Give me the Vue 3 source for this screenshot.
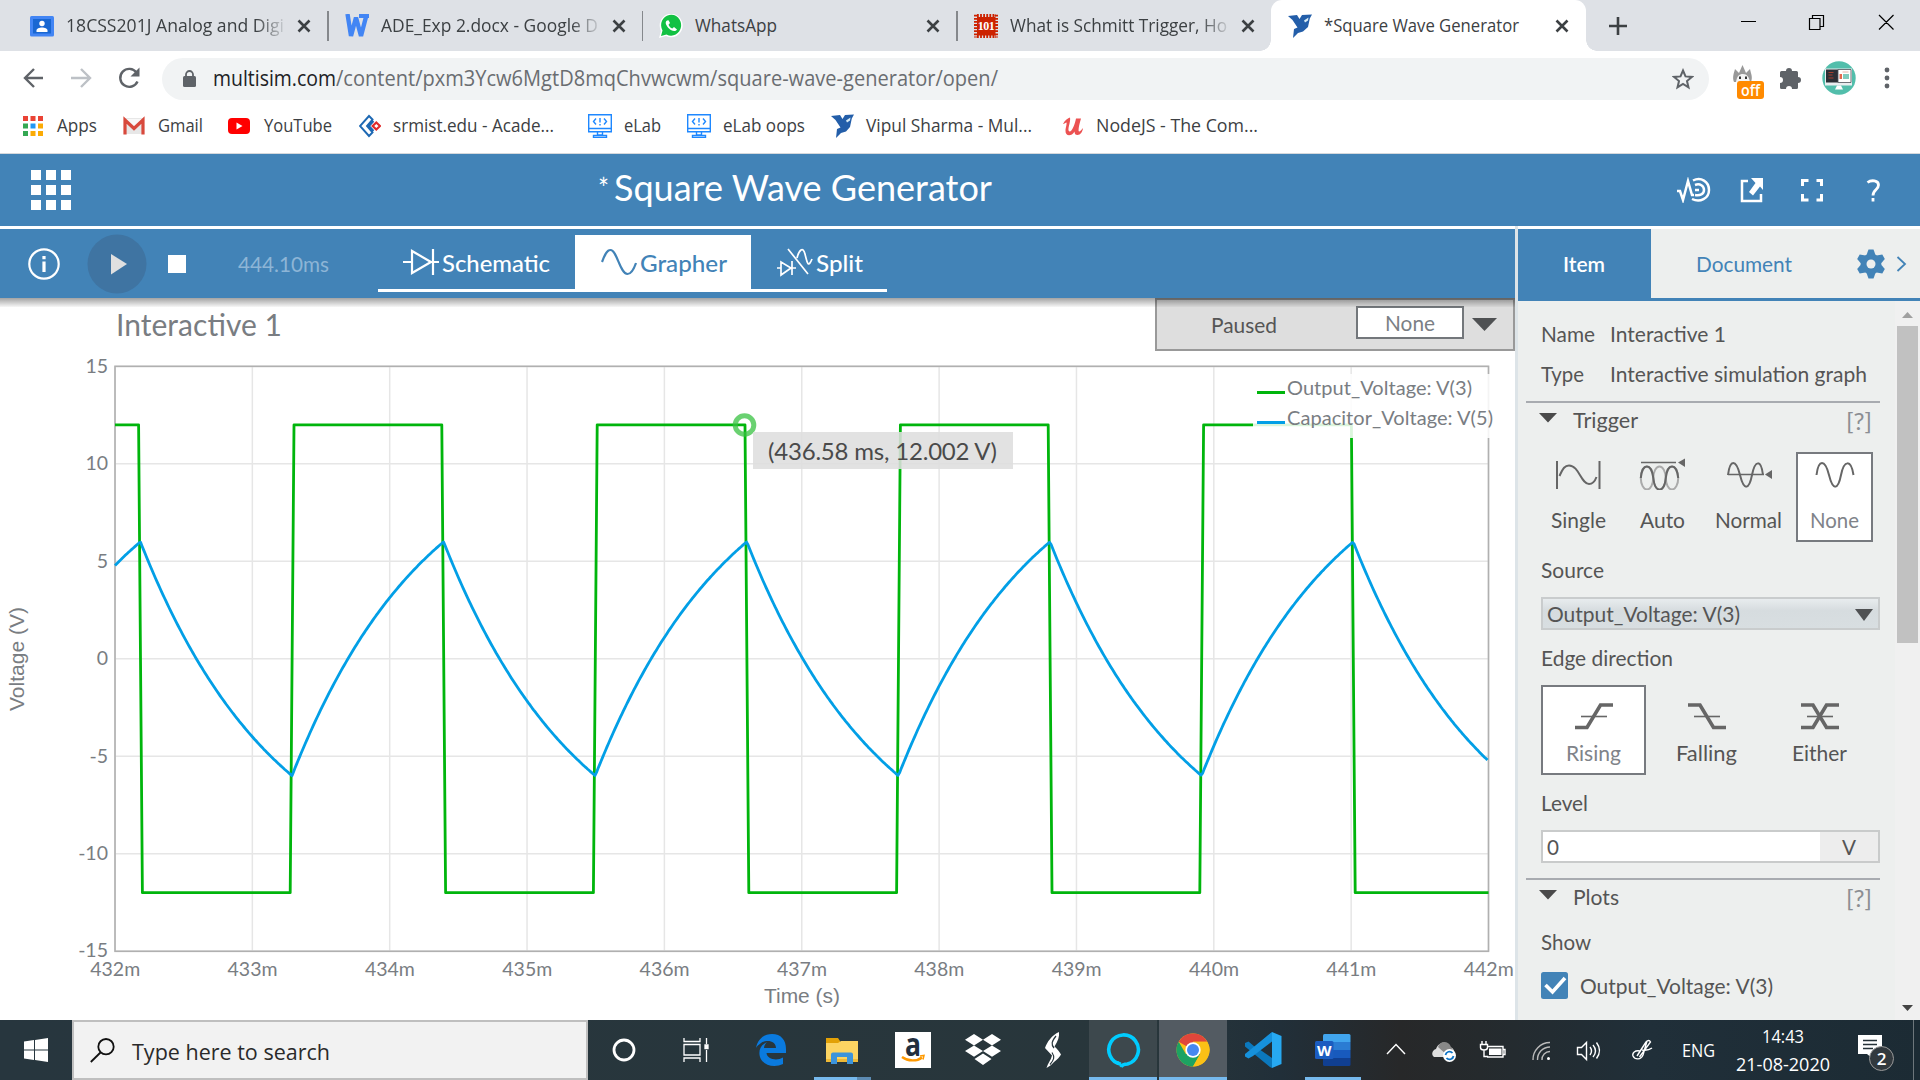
<script setup>
import { h } from 'vue'

// One line of text fitted to a width; its box is exactly the cap height.
const Fit = (p) => {
  const size = Number(p.s)
  const height = Math.round(size * 0.72)
  return h('svg', { width: p.w, height, style: 'display:block;overflow:visible;flex:none' }, [
    h('text', { x: 0, y: height, 'font-size': size, textLength: p.w, lengthAdjust: 'spacingAndGlyphs', fill: 'currentColor' }, p.t),
  ])
}
Fit.props = ['t', 'w', 's']

const tabs = [
  { icon: 'classroom', title: '18CSS201J Analog and Digi', w: 218 },
  { icon: 'docs', title: 'ADE_Exp 2.docx - Google D', w: 217 },
  { icon: 'whatsapp', title: 'WhatsApp', w: 82 },
  { icon: 'chip', title: 'What is Schmitt Trigger, Ho', w: 217 },
  { icon: 'ni', title: '*Square Wave Generator', w: 195, active: true },
]

const bookmarks = [
  { icon: 'apps', x: 22, iw: 22, gap: 13, title: 'Apps', w: 40 },
  { icon: 'gmail', x: 26, iw: 22, gap: 13, title: 'Gmail', w: 45 },
  { icon: 'youtube', x: 25, iw: 22, gap: 14, title: 'YouTube', w: 68 },
  { icon: 'srm', x: 27, iw: 22, gap: 12, title: 'srmist.edu - Acade...', w: 161 },
  { icon: 'elab', x: 34, iw: 24, gap: 12, title: 'eLab', w: 37 },
  { icon: 'elab', x: 26, iw: 24, gap: 12, title: 'eLab oops', w: 82 },
  { icon: 'ni', x: 26, iw: 23, gap: 12, title: 'Vipul Sharma - Mul...', w: 166 },
  { icon: 'udemy', x: 30, iw: 22, gap: 12, title: 'NodeJS - The Com...', w: 162 },
]

// Chart geometry: 432m..442m on x, -15..15 V on y
const X0 = 115
const X1 = 1488.5
const ZERO = 658.75
const UNIT = 19.49
const HALF = 151.6
const START = 140.4
const y = (v) => ZERO - v * UNIT

const xTicks = Array.from({ length: 11 }, (_, i) => ({ x: X0 + (i * (X1 - X0)) / 10, label: `${432 + i}m` }))
const yTicks = [15, 10, 5, 0, -5, -10, -15].map((v) => ({ v, y: y(v) }))

let square = `M${X0} ${y(12)}`
for (let k = 0; k < 9; k++) {
  const x = START + k * HALF
  const from = k % 2 ? -12 : 12
  square += ` L${x - 1.8} ${y(from)} L${x + 2} ${y(-from)}`
}
square += ` L${X1} ${y(-12)}`

const cap = []
for (let x = X0; x <= X1; x += 1.5) {
  const k = Math.floor((x - START) / HALF)
  const decay = 18 * Math.exp((-(x - START - k * HALF) / HALF) * Math.log(3))
  const v = k % 2 === 0 ? decay - 12 : 12 - decay
  cap.push(`${x.toFixed(1)},${y(v).toFixed(1)}`)
}
const capacitor = cap.join(' ')

const modes = [
  { name: 'Single', w: 55, box: 76, ml: -1 },
  { name: 'Auto', w: 45, box: 76, ml: 8 },
  { name: 'Normal', w: 67, box: 83, ml: 7 },
  { name: 'None', w: 49, box: 77, ml: 6, on: true },
]
const edges = [
  { name: 'Rising', w: 55, on: true },
  { name: 'Falling', w: 61 },
  { name: 'Either', w: 55 },
]
</script>

<template>
  <div class="screen">
    <!-- browser tabs -->
    <div class="tabs">
      <div v-for="(t, i) in tabs" :key="i" class="tab" :class="{ active: t.active, sep: i < 3 }">
        <svg class="fav" width="24" height="24" viewBox="0 0 24 24">
          <template v-if="t.icon === 'classroom'">
            <rect x="0" y="2" width="24" height="20.500" rx="1.500" fill="#4285f4" /><rect x="3" y="5" width="18" height="14.500" fill="#1967d2" />
            <circle cx="12" cy="9.500" r="2.700" fill="#fff" /><path d="M6.500 18v-1.500c0-4 11-4 11 0V18z" fill="#fff" />
          </template>
          <g v-else-if="t.icon === 'docs'" fill="none" stroke="#4285f4"><path d="M2.500 0L6 22 11 3.500 16 22 21.500 1" stroke-width="4.400" stroke-linejoin="bevel" /><path d="M14 2h10" stroke-width="4" /></g>
          <template v-else-if="t.icon === 'whatsapp'">
            <path d="M0 24l2-7A11.500 11.800 0 1 1 7 22z" fill="#fff" /><path d="M2 22l1.500-5.500A10 10.500 0 1 1 7.500 20.500z" fill="#12c143" />
            <path d="M8 6.500c-3 2 0 6 2 8s6 4 8 1l-3-2.500-1.700 1.500c-1.500-.5-3-2-3.800-3.800L11 9 9.500 6.200z" fill="#fff" />
          </template>
          <template v-else-if="t.icon === 'chip'">
            <rect x="3" y="3" width="18.500" height="18.500" fill="#cc2200" />
            <path d="M2 0.800v22.700M22.500 0.800v22.700" stroke="#cc2200" stroke-width="4" stroke-dasharray="1.800 1.300" /><path d="M3 1.500h19M3 22.800h19" stroke="#cc2200" stroke-width="3.500" stroke-dasharray="1.800 1.300" />
            <text x="12.200" y="16" text-anchor="middle" textLength="17" font-family="Liberation Serif, serif" font-weight="bold" font-size="12" fill="#fff">101</text>
          </template>
          <template v-else>
            <path d="M0 2l9-1 2.500 4L14 1l10-.5-2.200 4L20 13l-5 4.500-5 1.500-5 5 1-9 3.500-1.500L4.500 6z" fill="#235ea9" /><path d="M16 6.500l4.500-3-.5 3-3 2z" fill="#d7ebf5" />
          </template>
        </svg>
        <div class="tabtext" :class="{ fade: t.w > 210 }"><Fit :t="t.title" :w="t.w" s="18" /></div>
        <svg class="x" width="14" height="14" viewBox="0 0 14 14"><path d="M1.500 1.500l11 11M12.500 1.500l-11 11" stroke="#3c4043" stroke-width="2.600" /></svg>
      </div>
      <svg class="plus" width="18" height="18" viewBox="0 0 18 18"><path d="M9 0v18M0 9h18" stroke="#3c4043" stroke-width="2.600" /></svg>
      <svg class="win" width="154" height="17" viewBox="0 0 154 17">
        <path d="M0 7.500h15M68.500 4.500h10.500v11h-10.500zM71.500 4V1.500h11v11H79.500M138 1l14.500 14.500M152.500 1L138 15.500" fill="none" stroke="#000" stroke-width="1.200" />
      </svg>
    </div>

    <!-- address bar -->
    <div class="address">
      <svg width="120" height="24" viewBox="0 0 120 24" fill="none" stroke-width="2.400">
        <path d="M20 12H2M11 3l-9 9 9 9" stroke="#5f6368" /><path d="M48 12h18M58 3l9 9-9 9" stroke="#bdc1c6" />
        <path d="M114.500 15.500a9 9 0 1 1-1-9" stroke="#5f6368" /><path d="M116.500 1.500v9h-9z" fill="#5f6368" />
      </svg>
      <div class="omni">
        <svg width="13" height="17" viewBox="0 0 13 17"><rect y="6" width="13" height="11" rx="1.500" fill="#5f6368" /><path d="M3 7V4.500a3.500 3.500 0 0 1 7 0V7" fill="none" stroke="#5f6368" stroke-width="1.800" /></svg>
        <Fit class="host" t="multisim.com" w="123" s="21" />
        <Fit class="path" t="/content/pxm3Ycw6MgtD8mqChvwcwm/square-wave-generator/open/" w="662" s="21" />
        <svg class="star" width="22" height="22" viewBox="0 0 22 22"><path d="M11 2.500l2.500 5.900 6.400.5-4.900 4.200 1.500 6.300L11 16l-5.500 3.400L7 13.100 2.100 8.900l6.400-.5z" fill="none" stroke="#5f6368" stroke-width="2" /></svg>
      </div>
      <div class="ext">
        <svg width="24" height="20" viewBox="0 0 24 20"><path d="M3 18C1 13 3 9 4 5l4 4 3.500-8L15 9l4-4c1 5 3 8 1 13z" fill="#999" /><path d="M5 18c1-6 3-8 7-8s6 3 7 8z" fill="#f4f4f4" /><path d="M9 12.500v2.500M15 12.500v2.500" stroke="#333" stroke-width="2" /></svg>
        <span class="off"><Fit t="off" w="19" s="16" /></span>
      </div>
      <svg class="puzzle" width="22" height="22" viewBox="0 0 22 22"><path d="M0 5.500Q0 4 1.500 4H6a3 3 0 1 1 6 0h4.500Q18 4 18 5.500V10a3 3 0 0 1 0 6v4.500q0 1.500-1.500 1.500H12a3 3 0 0 0-6 0H1.500Q0 22 0 20.500V16a3 3 0 0 0 0-6z" fill="#5f6368" /></svg>
      <svg class="avatar" width="34" height="34" viewBox="0 0 34 34"><circle cx="17" cy="17" r="16.700" fill="#52beab" /><path d="M3 7.500h27v17H3z" fill="#e9edef" /><path d="M4 8.500h12v13H4z" fill="#2c2f35" /><path d="M16 8.500h13v13H16z" fill="#fff" stroke="#4b5157" stroke-width=".8" /><path d="M6.500 11.500h5M6.500 14h4M6.500 17h5" stroke="#a2402f" stroke-width="1.200" /><path d="M17.500 13h2.500v5h-2.500z" fill="#e4694f" /><path d="M20.500 11h6" stroke="#e8b3a8" /><path d="M21 13h6v5h-6z" fill="#80cbbd" /><path d="M15 24.500h4l2 4h-8z" fill="#fff" /></svg>
      <svg class="dots" width="6" height="22" viewBox="0 0 6 22" fill="#5f6368"><circle cx="3" cy="3" r="2.400" /><circle cx="3" cy="11" r="2.400" /><circle cx="3" cy="19" r="2.400" /></svg>
    </div>

    <!-- bookmarks -->
    <div class="bookmarks">
      <div v-for="(b, i) in bookmarks" :key="i" class="bm" :style="{ marginLeft: b.x + 'px', gap: b.gap + 'px' }">
        <svg :width="b.iw" height="24" :viewBox="`0 0 ${b.iw} 24`">
          <template v-if="b.icon === 'apps'">
            <path d="M1 2h5v5H1zM8.500 2h5v5h-5zM16 2h5v5h-5z" fill="#ea4335" /><path d="M1 9.500h5v5H1zM1 17h5v5H1z" fill="#34a853" /><path d="M8.500 9.500h5v5h-5z" fill="#2196f3" /><path d="M16 9.500h5v5h-5zM8.500 17h5v5h-5zM16 17h5v5h-5z" fill="#fbab05" />
          </template>
          <template v-else-if="b.icon === 'gmail'"><path d="M1 4h20v16H1z" fill="#e7e7e7" /><path d="M3 5h16l-8 7z" fill="#f8f8f8" /><path d="M2 20.500V6l9 8.500L20 6v14.500" fill="none" stroke="#d8493c" stroke-width="3.200" /></template>
          <template v-else-if="b.icon === 'youtube'"><rect y="4" width="22" height="16" rx="4" fill="#f00" /><path d="M8.500 8.500l6 3.500-6 3.500z" fill="#fff" /></template>
          <template v-else-if="b.icon === 'srm'"><path d="M13.500 5.500L10 2 1 12l9 10 3.500-3.500L8 12zM14.500 7L10 12l4.500 5" fill="none" stroke="#1d68b3" stroke-width="1.900" /><path d="M17.300 8.500L21 12l-3.700 3.500L13.700 12z" fill="none" stroke="#e12b2b" stroke-width="2.200" /></template>
          <g v-else-if="b.icon === 'elab'" fill="none" stroke="#1e88ff" stroke-width="1.400"><path d="M.7.700h22.600v17H.7zM.7 14.500h22.600M9.500 18v3h5v-3M5.500 21.500h13v2h-13z" /><path d="M8 4.500L5.500 7.500 8 10.500M16 4.500l2.500 3-2.500 3M12 4v4.500M12 10v1.500" /></g>
          <template v-else-if="b.icon === 'ni'"><path d="M0 2l9-1 2.500 4L14 1l9-.5-2.200 4L19 13l-4 4.500-5 1.500-5 5 1-9 3.500-1.500L4.500 6z" fill="#235ea9" /><path d="M15 6.500l4.500-3-.5 3-3 2z" fill="#d7ebf5" /></template>
          <path v-else d="M1 10C3 6 6 4 8 3.500 9 8 4.500 16.500 7.500 17.500 10 18 13 10 14 4.500h5C17 11 16 17 17 17.500c1.500 0 2-1.500 4-3.500-.5 4-2.500 7-5.500 7-2 0-3-1-3-3.500-3 5.500-9.500 5-9-1C3.500 14 5 10 4.500 8.500 3.500 8.500 2.500 10 1 10z" fill="#ec5252" />
        </svg>
        <Fit class="up1" :t="b.title" :w="b.w" s="18" />
      </div>
    </div>

    <!-- application header -->
    <header class="app">
      <svg width="40" height="40" viewBox="0 0 40 40" fill="#fff"><path d="M0 0h10v10H0zM15 0h10v10H15zM30 0h10v10H30zM0 15h10v10H0zM15 15h10v10H15zM30 15h10v10H30zM0 30h10v10H0zM15 30h10v10H15zM30 30h10v10H30z" /></svg>
      <div class="title"><Fit class="asterisk" t="*" w="11" s="29" /><Fit t="Square Wave Generator" w="378" s="36" /></div>
      <svg class="hi" width="208" height="26" viewBox="0 0 208 26" fill="none" stroke="#fff" stroke-width="2.500">
        <path d="M1 14h3l3 9 5-19 4 14h2M17 3.500c8-4 16 1 16 9.500s-9 13-17 9M19 8c5-2 9 1 9 5s-4 6-9 5M19 13h4" />
        <path d="M72 4h-6v20h19v-7" /><path d="M75 1h12v12l-3-3.500-7 9-4-3.500 6.500-9z" fill="#fff" stroke="none" />
        <path d="M126.500 9V3.500h6M140.500 3.500h5V9M145.500 17v6h-5M132.500 23h-6v-6" stroke-width="3" />
        <path d="M191.500 5.500c4-3 11-2 11 2.500 0 5-5.500 4.500-5.500 10.500M197 21v3.500" stroke-width="2.800" />
      </svg>
    </header>

    <div class="work">
      <main class="left">
        <div class="bar">
          <svg class="info" width="32" height="32" viewBox="0 0 32 32"><circle cx="16" cy="16" r="14.700" fill="none" stroke="#fff" stroke-width="2.200" /><path d="M16 13.500V24M16 8v3.200" stroke="#fff" stroke-width="3.200" /></svg>
          <svg class="play" width="60" height="60" viewBox="0 0 60 60"><circle cx="30" cy="30" r="29.500" fill="#3f74a2" /><path d="M24 20l16 10-16 10.500z" fill="#e0e0e0" /></svg>
          <span class="stop"></span>
          <Fit class="time down1" t="444.10ms" w="91" s="21" />
          <nav class="views">
            <div class="view v1">
              <svg width="36" height="28" viewBox="0 0 36 28" fill="none" stroke="#fff" stroke-width="2.200"><path d="M0 14h9M30 14h6M9 3v22l19-11zM30 1v26" /></svg>
              <Fit class="down1" t="Schematic" w="108" s="23.500" />
            </div>
            <div class="view v2">
              <svg width="36" height="28" viewBox="0 0 36 28" fill="none" stroke="#4283b7" stroke-width="2.200"><path d="M1 14C4 6 6 2 9.500 2 16 2 19 26 26.500 26c3.500 0 6-4 8.500-11" /></svg>
              <Fit class="down1" t="Grapher" w="87" s="23.500" />
            </div>
            <div class="view v3">
              <svg width="36" height="30" viewBox="0 0 36 30" fill="none" stroke="#fff" stroke-width="1.700"><path d="M0 21h4M15 21h4M4 15v13l10-7zM15 14v14M11 2l20 25M20 11c2-8 6-12 8-4s3 15 7 5" /></svg>
              <Fit class="down1" t="Split" w="47" s="23.500" />
            </div>
          </nav>
        </div>
        <div class="graph">
          <svg width="1515" height="722" viewBox="0 298 1515 722" class="chart">
            <text x="116" y="336" font-size="30" textLength="166">Interactive 1</text>
            <g stroke="#e6e6e6" stroke-width="1.500">
              <path v-for="t in xTicks" :key="t.label" :d="`M${t.x} 366V951`" />
              <path v-for="t in yTicks" :key="t.v" :d="`M${X0} ${t.y}H${X1}`" />
            </g>
            <rect :x="X0" y="366.300" :width="X1 - X0" height="585" fill="none" stroke="#b0b0b0" stroke-width="1.600" />
            <text v-for="t in yTicks" :key="'y' + t.v" x="108" :y="t.y + 6.300" text-anchor="end" font-size="19.500">{{ t.v }}</text>
            <text v-for="t in xTicks" :key="'x' + t.label" :x="t.x + 0.200" y="976" text-anchor="middle" font-size="19.500">{{ t.label }}</text>
            <text class="arial" x="764" y="1003" font-size="20" textLength="76" lengthAdjust="spacingAndGlyphs">Time (s)</text>
            <text class="arial" x="-711" y="24" font-size="20" textLength="104" lengthAdjust="spacingAndGlyphs" transform="rotate(-90)">Voltage (V)</text>
            <path :d="square" fill="none" stroke="#00b50c" stroke-width="2.800" stroke-linejoin="round" />
            <polyline :points="capacitor" fill="none" stroke="#029fe6" stroke-width="2.800" stroke-linejoin="round" />
            <rect x="1253" y="374" width="245" height="64" fill="#fff" opacity=".86" />
            <path d="M1257 392.500h28" stroke="#00b50c" stroke-width="3" /><path d="M1257 422.500h28" stroke="#029fe6" stroke-width="3" />
            <text x="1287" y="395" font-size="20" textLength="185">Output_Voltage: V(3)</text>
            <text x="1287" y="425" font-size="20" textLength="206">Capacitor_Voltage: V(5)</text>
            <circle cx="744.500" cy="425" r="9.300" fill="none" stroke="#38c142" stroke-opacity=".75" stroke-width="5" />
            <rect x="753" y="432" width="260" height="37" fill="#dedede" opacity=".88" />
            <text x="768" y="460" font-size="24" textLength="229" fill="#4a4a4a" class="tip">(436.58 ms, 12.002 V)</text>
          </svg>
          <div class="status">
            <Fit class="paused down1" t="Paused" w="66" s="21" />
            <div class="nonebox"><Fit class="down1" t="None" w="50" s="21" /></div>
            <svg width="25" height="13" viewBox="0 0 25 13"><path d="M0 0h25L12.500 13z" fill="#4f5153" /></svg>
          </div>
          <div class="shade"></div>
        </div>
      </main>

      <aside class="side">
        <div class="sidetabs">
          <div class="item"><Fit class="down1" t="Item" w="42" s="21.500" /></div>
          <div class="doc">
            <Fit class="down1" t="Document" w="96" s="21.500" />
            <svg class="gear" width="28" height="30" viewBox="-14 -15 28 30" fill="#4283b7"><circle r="10.300" /><g v-for="a in [0, 60, 120]" :key="a" :transform="`rotate(${a})`"><path d="M-4.500-9L-2.500-14.500h5L4.500-9v18l-2 5.500h-5l-2-5.500z" /></g><circle r="4.500" fill="#edefee" /></svg>
            <svg width="11" height="16" viewBox="0 0 11 16"><path d="M1.500 1L9 8l-7.500 7" fill="none" stroke="#4283b7" stroke-width="1.800" /></svg>
          </div>
        </div>
        <div class="sidebody">
          <div class="props">
            <div class="row mt26"><Fit t="Name" w="54" s="21" /><Fit class="val" t="Interactive 1" w="116" s="21" /></div>
            <div class="row mt25"><Fit t="Type" w="43" s="21" /><Fit class="val2" t="Interactive simulation graph" w="257" s="21" /></div>
            <div class="rule mt19"></div>
            <div class="row mt10 sect"><svg width="18" height="15" viewBox="0 0 18 15"><path d="M0 0h18L9 9.500z" fill="#4a4a4a" /></svg><Fit class="st" t="Trigger" w="65" s="21" /><Fit class="q" t="[?]" w="26" s="24" /></div>
            <div class="row modes">
              <div v-for="m in modes" :key="m.name" class="pick mode" :class="{ on: m.on }" :style="{ width: m.box + 'px', marginLeft: m.ml + 'px' }">
                <svg width="48" height="32" viewBox="0 0 48 32" fill="none" stroke="#666" stroke-width="2">
                  <path v-if="m.name === 'Single'" d="M3 3v28M45.500 3v28M5.500 18C9 10 11 7.500 15 7.500 25 7.500 27 26 35 26c4 0 6-3 7.500-7" />
                  <template v-else-if="m.name === 'Auto'"><ellipse cx="9" cy="20" rx="6.200" ry="11.500" stroke="#aaa" /><ellipse cx="21.500" cy="20" rx="6.200" ry="11.500" stroke="#aaa" /><ellipse cx="34" cy="20" rx="6.200" ry="11.500" stroke="#aaa" /><path d="M2.800 20C4 4.500 13.500 4.500 15.300 20s11 15.500 12.500 0 11-15.500 12.400 0" /><path d="M3 4.500h35" stroke-width="1.600" /><path d="M40 4.500l7-4v8.500z" fill="#666" stroke="none" /></template>
                  <template v-else-if="m.name === 'Normal'"><path d="M3 17C5 1 11 1 15 17s9 15 12 0S36 1 38 17" /><path d="M3 16.500h36" stroke-width="1.600" /><path d="M40 16.500l7-4.500v9z" fill="#666" stroke="none" /></template>
                  <path v-else d="M5.500 17C7.500 1 14 1 18 17s9 15 12 0S40 1 42.500 17" />
                </svg>
                <Fit :t="m.name" :w="m.w" s="21" />
              </div>
            </div>
            <Fit class="mt21" t="Source" w="63" s="21" />
            <div class="select mt19"><Fit class="down1" t="Output_Voltage: V(3)" w="193" s="21" /><svg class="down1" width="18" height="12" viewBox="0 0 18 12"><path d="M0 0h18L9 12z" fill="#4f5153" /></svg></div>
            <Fit class="mt21" t="Edge direction" w="132" s="21" />
            <div class="row edges mt19">
              <div v-for="e in edges" :key="e.name" class="pick edge" :class="{ on: e.on }">
                <svg width="38" height="28" viewBox="0 0 38 28" fill="none" stroke="#666" stroke-width="3.600">
                  <path v-if="e.name !== 'Falling'" d="M0 25.500h12L25.500 3H38" /><path v-if="e.name !== 'Rising'" d="M0 3h12l13.500 22.500H38" /><path d="M6 14.500h26" stroke-width="1.600" />
                </svg>
                <Fit :t="e.name" :w="e.w" s="21" />
              </div>
            </div>
            <Fit class="mt21" t="Level" w="47" s="21" />
            <div class="input mt19"><Fit class="zero down1" t="0" w="12" s="21" /><div class="unit"><Fit class="down1" t="V" w="14" s="21" /></div></div>
            <div class="rule mt15"></div>
            <div class="row mt10 sect"><svg width="18" height="15" viewBox="0 0 18 15"><path d="M0 0h18L9 9.500z" fill="#4a4a4a" /></svg><Fit class="st" t="Plots" w="46" s="21" /><Fit class="q" t="[?]" w="26" s="24" /></div>
            <Fit class="mt30" t="Show" w="50" s="21" />
            <div class="row check"><svg width="27" height="27" viewBox="0 0 27 27"><rect width="27" height="27" rx="2.500" fill="#4283b7" /><path d="M4.500 13l7 7L24 6" fill="none" stroke="#fff" stroke-width="3.600" /></svg><Fit class="down1" t="Output_Voltage: V(3)" w="193" s="21" /></div>
          </div>
          <div class="scroll">
            <svg width="11" height="6" viewBox="0 0 11 6"><path d="M0 6h11L5.500 0z" fill="#a0a0a0" /></svg>
            <div class="thumb"></div>
            <svg class="down" width="11" height="6" viewBox="0 0 11 6"><path d="M0 0h11L5.500 6z" fill="#444" /></svg>
          </div>
        </div>
      </aside>
    </div>

    <!-- taskbar -->
    <footer class="task">
      <div class="start"><svg width="24" height="24" viewBox="0 0 24 24" fill="#fff"><path d="M0 3.500l10-1.400v9.400H0zM11 2L24 0v11.500H11zM0 12.500h10v9.400L0 20.500zM11 12.500h13V24l-13-2z" /></svg></div>
      <div class="search"><svg width="25" height="25" viewBox="0 0 25 25" fill="none" stroke="#111" stroke-width="1.800"><circle cx="16" cy="8.700" r="7.700" /><path d="M10.500 14.500L.8 24" /></svg><Fit class="down2" t="Type here to search" w="198" s="22.500" /></div>
      <div class="slot s72"><svg width="24" height="24" viewBox="0 0 24 24"><circle cx="12" cy="12" r="10" fill="none" stroke="#fff" stroke-width="2.800" /></svg></div>
      <div class="slot s72"><svg width="26" height="24" viewBox="0 0 26 24" fill="none" stroke="#fff" stroke-width="1.300"><path d="M1 0v3.500h16V0M1 6.500h16V17H1zM1 24v-4h16v4M23.500 0v6M23.500 12v12" /><path d="M22 7h3v3.500h-3z" fill="#fff" /></svg></div>
      <div class="slot edge-app"><svg width="32" height="32" viewBox="0 0 32 32"><path d="M1 14C3 4 10 0 17 0c9 0 14 6 14 15v4H11.500c.5 6 10 8.500 16.500 4.500V30c-8 4-20 2-23-7-2-7 1-12 7-15-2 2-3 4-3 6h12c0-7-9-9-15-5-2 1.500-4 3-5 5z" fill="#0a7ade" /></svg></div>
      <div class="slot files"><svg width="32" height="27" viewBox="0 0 32 27"><path d="M0 1h12l2 3v5H0z" fill="#e2a106" /><path d="M0 6h12l3-2h17v21H0z" fill="#fcd462" /><path d="M0 22h32v3H0z" fill="#efb936" /><path d="M5 27v-9.500q0-2 2-2h18q2 0 2 2V27h-6v-7H11v7z" fill="#3c94dc" /></svg><i class="line fol"></i></div>
      <div class="slot amazon"><svg class="tile" width="36" height="36" viewBox="0 0 36 36"><path d="M0 0h36v36H0z" fill="#fff" /><text x="10" y="24" font-family="Open Sans, sans-serif" font-weight="bold" font-size="32" textLength="16" lengthAdjust="spacingAndGlyphs" fill="#222f3e">a</text><path d="M7 25c6 4.500 15 4.500 20 .5" fill="none" stroke="#f90" stroke-width="2.300" /><path d="M25 24l4-.5-1 4" fill="none" stroke="#f90" stroke-width="1.500" /></svg></div>
      <div class="slot dropbox"><svg width="36" height="32" viewBox="0 0 36 32" fill="#fff"><path d="M9 0l9 5.700-9 5.700-9-5.700zM27 0l9 5.700-9 5.700-9-5.700zM9 11.400l9 5.700-9 5.700-9-5.700zM27 11.400l9 5.700-9 5.700-9-5.700zM18 19.500l8.500 5.500-8.500 6-8.500-6z" /></svg></div>
      <div class="slot stripe"><svg width="18" height="36" viewBox="0 0 18 36" fill="#fff"><path d="M15 0c.5 5-1 9-4.500 14.500 3 3 5 5 6.500 8-1.500 3-4 5-7 7.500-2 2.500-5 4.500-7.500 6 1.500-5 4.500-8 5.500-12.500L1 16C3 10 8 3 15 0z" /><path d="M12 4c-4.500 5.500-5 8.500-2 12M6 32.500c4-4.500 5-7.500 2-12" stroke="#28363c" fill="none" stroke-width="1.200" /></svg></div>
      <div class="slot alexa"><svg width="36" height="36" viewBox="0 0 36 36"><path d="M16 32.300A14.800 14.800 0 1 1 22.500 32C19 32 17 33 16 35" fill="none" stroke="#0cf" stroke-width="3.600" /><path d="M11 30c3 0 5 1.500 5.500 5" fill="none" stroke="#0cf" stroke-width="2" /></svg><i class="line"></i></div>
      <div class="slot chrome"><svg width="34" height="34" viewBox="-17 -17 34 34"><circle r="16.500" fill="#fbc116" /><path d="M0 0L-14.300-8.300A16.500 16.500 0 0 1 14.300-8.300H0z" fill="#e0463b" /><path d="M-14.300-8.300A16.500 16.500 0 0 0 0 16.500L7.200 4-7.200 4z" fill="#1da362" /><path d="M14.300-8.300A16.500 16.500 0 0 1 0 16.500L7.200 4 7-4 0-8.300z" fill="#fbc116" /><circle r="7.700" fill="#fff" /><circle r="6" fill="#4688f1" /></svg><i class="line"></i></div>
      <div class="slot s72"><svg width="37" height="36" viewBox="0 0 37 36"><path d="M27 0L10 15 3.500 9.500 0 11v3.500L25 35l2 1V26L14 17z" fill="#0b78bd" /><path d="M3.500 26.500L0 24.500V22L27 0v9.500L8 24z" fill="#1691dc" /><path d="M27 0l9.500 4v28L27 36z" fill="#27a9f2" /></svg></div>
      <div class="slot word"><svg width="36" height="32" viewBox="0 0 36 32"><path d="M8 1.500Q8 0 9.500 0H34q1.500 0 1.500 1.500V8H8z" fill="#41a5ee" /><path d="M8 8h27.500v8H8z" fill="#2b7cd3" /><path d="M8 16h27.500v8H8z" fill="#185abd" /><path d="M8 24h27.500v6.500Q35.500 32 34 32H9.500Q8 32 8 30.500z" fill="#103f91" /><rect y="7" width="18.500" height="18" rx="1.500" fill="#1b5cc0" /><text x="9.200" y="21.500" text-anchor="middle" font-family="Open Sans, sans-serif" font-size="15" font-weight="bold" fill="#fff">W</text></svg><i class="line"></i></div>
      <svg class="tray" width="270" height="26" viewBox="1384 1037 270 26" fill="none" stroke="#fff" stroke-width="1.400">
        <path d="M1387 1054l9-9.500 9 9.500" />
        <g stroke="none"><path d="M1434 1057c-3-2-2-7 2-8 2-7 11-9 14-2 5 1 6 9 2 10z" fill="#dedede" /><path d="M1438 1047c2-7 11-6 13 0l3 5-6 4z" fill="#888" /><circle cx="1449.500" cy="1055.500" r="6.500" fill="#fff" /></g><path d="M1445.500 1055a4 4 0 0 1 7-2M1453.500 1056a4 4 0 0 1-7 2" stroke="#0b73c7" stroke-width="1.800" />
        <path d="M1487 1046.500h16v10.500h-16M1503 1049.500h2v5h-2M1482 1041v3M1486 1041v3M1480.500 1044.500h7v3q0 2.500-3.500 2.500t-3.500-2.500zM1484 1050v6.500h4" /><path d="M1489 1048.500h12.500v6.500H1489z" fill="#fff" stroke="none" />
        <path d="M1533 1060a17 17 0 0 1 17-17.500M1537.500 1060a12.500 12.500 0 0 1 12.500-13M1542 1060a8 8 0 0 1 8-8.500" stroke="#bbb" /><circle cx="1548.500" cy="1058.500" r="1.500" fill="#fff" stroke="none" />
        <path d="M1577.500 1047.500h4l5-5v17l-5-5h-4zM1590 1047q3 4 0 8M1593 1045q5 6 0 12M1596.500 1042.500q6 8 0 16" />
        <path d="M1637 1056l9-14q3-3 4.500 0l-11 15M1640 1051c-5-1-8 2-7 5 2 4 8 4 10-1l4-14M1642 1050q6 1 10-2" />
      </svg>
      <Fit class="eng" t="ENG" w="33" s="17.500" />
      <div class="clock"><Fit t="14:43" w="42" s="18" /><Fit t="21-08-2020" w="94" s="18" /></div>
      <svg class="note" width="38" height="40" viewBox="0 0 38 40"><path d="M0 2h24v19h-9v5l-6-5H0z" fill="#fff" /><path d="M5 7.500h14M5 11.500h14M5 15.500h10" stroke="#263238" stroke-width="1.300" /><circle cx="23.500" cy="25.500" r="12" fill="#32393e" stroke="#999" /><text x="23.500" y="32" text-anchor="middle" font-size="17" font-weight="600" fill="#fff">2</text></svg>
      <span class="desk"></span>
    </footer>
  </div>
</template>

<style>
body { margin: 0; overflow: hidden; }
</style>

<style scoped>
.screen { width: 1920px; height: 1080px; display: flex; flex-direction: column; overflow: hidden; background: #fff; font-family: "Open Sans", "Noto Sans", sans-serif; color: #3c4043; }
.screen > * { box-sizing: border-box; flex: none; }
svg { display: block; flex: none; }
.up1 { margin-bottom: 1px; }
.down1 { margin-top: 2px; }
.down2 { margin-top: 3px; }

.tabs { height: 51px; background: #dee1e6; display: flex; align-items: center; padding-left: 13px; }
.tab { width: 314.6px; height: 51px; display: flex; align-items: center; position: relative; box-sizing: border-box; padding-left: 17px; }
.tab.sep::after { content: ""; position: absolute; right: -1px; top: 11px; height: 30px; width: 1.500px; background: #85888c; }
.tab.active { background: #fff; border-radius: 11px 11px 0 0; }
.tab.active::before, .tab.active::after { content: ""; position: absolute; bottom: 0; width: 11px; height: 11px; }
.tab.active::before { left: -11px; background: radial-gradient(circle at 0 0, transparent 10.500px, #fff 11px); }
.tab.active::after { right: -11px; background: radial-gradient(circle at 100% 0, transparent 10.500px, #fff 11px); }
.tabtext { margin-left: 12px; width: 218px; padding: 7px 0 8px; }
.tabtext.fade { -webkit-mask-image: linear-gradient(90deg, #000 190px, transparent 222px); mask-image: linear-gradient(90deg, #000 190px, transparent 222px); }
.x { margin-left: 13px; }
.plus { margin-left: 23px; }
.win { margin: -7px 0 0 114px; }

.address { height: 54px; display: flex; align-items: center; padding-left: 23px; }
.omni { margin-left: 19px; width: 1547px; height: 42px; background: #f1f3f4; border-radius: 21px; display: flex; align-items: center; box-sizing: border-box; padding-left: 21px; margin-top: 1px; }
.host { margin-left: 17px; color: #202124; }
.path { color: #6a6d71; }
.star { margin-left: 674px; }
.ext { margin-left: 22px; width: 34px; height: 34px; position: relative; }
.ext > svg { margin-top: 3px; }
.off { position: absolute; left: 6px; top: 20px; width: 27px; height: 18px; border-radius: 3px; background: #ff8a00; color: #fff; font-weight: 600; display: flex; justify-content: center; align-items: center; }
.puzzle { margin-left: 15px; }
.avatar { margin-left: 20px; }
.dots { margin-left: 28px; }

.bookmarks { height: 49px; display: flex; align-items: flex-start; padding-top: 9px; border-bottom: 1px solid #d5d8dc; }
.bm { display: flex; align-items: center; }

.app, .work { font-family: Lato, sans-serif; }
.app { height: 72px; background: #4283b7; color: #fff; display: flex; align-items: center; padding-left: 31px; }
.title { display: flex; align-items: flex-start; gap: 5px; margin: -4px 0 0 527px; }
.asterisk { margin-top: 3px; }
.hi { margin-left: 684px; }
.work { height: 794px; padding-top: 0; display: flex; }
.left { width: 1515px; padding-top: 3px; }
.bar { height: 69px; background: #4283b7; color: #fff; display: flex; align-items: center; }
.info { margin-left: 28px; }
.play { margin-left: 27px; }
.stop { width: 18px; height: 18px; background: #fff; margin-left: 21px; }
.time { margin-left: 52px; color: #8db5d6; }
.views { margin-left: 49px; height: 57px; border-bottom: 3px solid #fff; display: flex; box-sizing: border-box; font-weight: 500; }
.view { height: 54px; box-sizing: border-box; display: flex; align-items: center; gap: 3px; }
.view svg:first-child { margin-top: -1px; }
.v1 { width: 197px; padding-left: 25px; }
.v2 { width: 176px; background: #fff; color: #4283b7; padding-left: 26px; }
.v3 { width: 136px; padding-left: 26px; }
.graph { position: relative; height: 722px; }
.chart { fill: #797d82; }
.chart .arial { font-family: "Liberation Sans", Arial, sans-serif; }
.shade { position: absolute; inset: 0 0 auto 0; height: 9px; background: linear-gradient(rgba(0,0,0,.36), rgba(0,0,0,.03)); }
.status { position: absolute; right: 0; top: 0; width: 360px; height: 53px; box-sizing: border-box; border: 2px solid #999; background: #dedede; display: flex; align-items: center; color: #555; }
.paused { margin-left: 54px; }
.nonebox { margin: -4px 8px 0 79px; width: 108px; height: 33px; box-sizing: border-box; border: 2px solid #73777b; background: #fff; color: #7b7f85; display: flex; align-items: center; justify-content: center; }

.side { width: 405px; border-left: 3px solid #dde4e8; box-sizing: border-box; background: #edefee; color: #555; }
.sidetabs { border-top: 3px solid #fff; height: 75px; box-sizing: border-box; display: flex; border-bottom: 3px solid #4283b7; }
.item { width: 133px; box-sizing: border-box; padding-right: 2px; background: #4283b7; color: #fff; display: flex; align-items: center; justify-content: center; font-weight: 600; }
.doc { flex: 1; display: flex; align-items: center; padding-left: 45px; color: #4283b7; }
.gear { margin: 0 11px 0 65px; }
.sidebody { display: flex; height: 719px; overflow: hidden; }
.props { width: 377px; box-sizing: border-box; padding: 0 15px 0 23px; }
.row { display: flex; }
.mt10 { margin-top: 10px; } .mt15 { margin-top: 15px; } .mt19 { margin-top: 19px; } .mt21 { margin-top: 21px; } .mt25 { margin-top: 25px; } .mt26 { margin-top: 26px; } .mt30 { margin-top: 30px; }
.val { margin-left: 15px; } .val2 { margin-left: 26px; }
.rule { height: 2px; background: #a8abb0; margin-left: -15px; }
.sect { height: 15px; margin-left: -2px; }
.st { margin-left: 16px; }
.q { margin-left: auto; margin-right: 8px; color: #8b8e93; }
.modes { margin-top: 24px; }
.pick { box-sizing: border-box; height: 90px; border: 2px solid transparent; display: flex; flex-direction: column; align-items: center; }
.pick.on { background: #fff; border-color: #777a7f; color: #808389; }
.mode { padding-top: 4px; gap: 23px; }
.edges { gap: 8px; }
.edge { width: 105px; padding-top: 15px; gap: 16px; }
.select { height: 33px; box-sizing: border-box; border: 2px solid #c9cccd; background: linear-gradient(#e8ecee, #d6dcdf 40%, #d8dee1); display: flex; align-items: center; justify-content: space-between; padding: 0 5px 0 4px; }
.input { height: 33px; box-sizing: border-box; border: 2px solid #c9cbcb; background: #fff; display: flex; align-items: center; justify-content: space-between; }
.zero { margin-left: 4px; }
.unit { width: 58px; height: 29px; background: #ededed; display: flex; align-items: center; justify-content: center; }
.check { margin-top: 22px; align-items: center; gap: 12px; }
.scroll { width: 25px; background: #f0f0f0; display: flex; flex-direction: column; align-items: center; padding-top: 11px; box-sizing: border-box; }
.thumb { width: 21px; height: 317px; background: #c1c1c1; margin-top: 8px; }
.down { margin: auto 0 9px; }

.task { height: 60px; display: flex; align-items: center; color: #fff; background: linear-gradient(90deg, #27363e 0, #28363b 1150px, #212f39 1280px, #272829 1400px, #252a2d 1480px, #202f39 1650px, #1c2b34 1920px); }
.start { width: 72px; padding-left: 24px; box-sizing: border-box; }
.search { width: 516px; height: 60px; box-sizing: border-box; border: 2px solid #bfbfbf; background: #f2f2f2; color: #2a2a2a; display: flex; align-items: center; padding-left: 16px; gap: 17px; }
.slot { position: relative; height: 60px; display: flex; align-items: center; justify-content: center; flex: none; box-sizing: border-box; }
.s72 { width: 72px; }
.edge-app { width: 78px; }
.files { width: 64px; }
.amazon { width: 78px; }
.tile { overflow: visible; }
.dropbox { width: 62px; }
.stripe { width: 75px; padding-left: 3px; }
.line { position: absolute; left: 0; right: 0; bottom: 0; height: 3px; background: #76b9ed; }
.fol { left: 4px; right: 3px; background: linear-gradient(90deg, #76b9ed 43px, #5c8bb2 43px); }
.alexa { width: 68px; background: #3d484d; margin-right: 2px; }
.chrome { width: 68px; background: #535b62; }
.word { width: 56px; margin-left: 6px; padding-right: 1px; }
.tray { margin-left: 23px; }
.eng { margin-left: 28px; }
.clock { margin-left: 21px; display: flex; flex-direction: column; align-items: center; gap: 15px; margin-top: 1px; }
.note { margin: 5px 0 0 28px; font-family: "Open Sans", sans-serif; }
.desk { margin-left: auto; margin-right: 6px; width: 1.500px; height: 60px; background: #6d767b; }
</style>
